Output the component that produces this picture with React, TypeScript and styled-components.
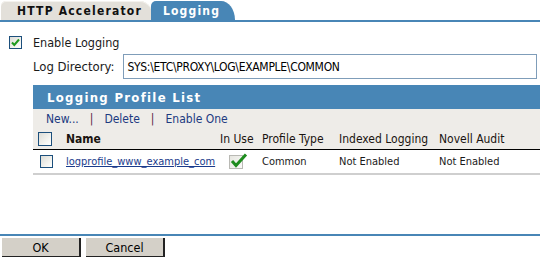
import React from "react";
import styled, { createGlobalStyle } from "styled-components";

const BLUE = "#4886b6";

const GlobalStyle = createGlobalStyle`
  html, body {
    margin: 0;
    padding: 0;
    background: #ffffff;
  }
  body {
    font-family: "DejaVu Sans Condensed", "DejaVu Sans", sans-serif;
    font-size: 12px;
    color: #1a1a1a;
  }
`;

const Page = styled.div`
  width: 540px;
  height: 258px;
  display: flex;
  flex-direction: column;
  overflow: hidden;
`;

const TabStrip = styled.div`
  display: flex;
  align-items: flex-end;
  height: 20px;
  padding-left: 1px;
  border-bottom: 2px solid ${BLUE};
`;

const Tab = styled.div<{ $active?: boolean }>`
  height: 19px;
  display: flex;
  align-items: center;
  padding: 0 ${(p) => (p.$active ? "15px 0 12px" : "12px 0 16px")};
  margin-left: ${(p) => (p.$active ? "-3px" : "0")};
  border-radius: 5px 14px 0 0 / 5px 19px 0 0;
  background: ${(p) => (p.$active ? BLUE : "#e3e0da")};
  color: ${(p) => (p.$active ? "#ffffff" : "#111111")};
  font-family: "DejaVu Sans Condensed", "DejaVu Sans", sans-serif;
  font-weight: bold;
  font-size: 12px;
  letter-spacing: 1.2px;
  position: relative;
  z-index: ${(p) => (p.$active ? 1 : 0)};
  box-shadow: ${(p) => (p.$active ? "none" : "inset 0 1px 0 #f4f2ee")};
`;

const Body = styled.div`
  flex: 1;
  display: flex;
  flex-direction: column;
  padding-top: 14px;
`;

const EnableRow = styled.label`
  display: flex;
  align-items: center;
  gap: 11px;
  margin-left: 9px;
  height: 13px;
  font-size: 12.5px;
`;

const Box = styled.span<{ $size?: number }>`
  display: inline-flex;
  align-items: center;
  justify-content: center;
  box-sizing: border-box;
  width: ${(p) => p.$size ?? 13}px;
  height: ${(p) => p.$size ?? 13}px;
  border: 1px solid #1c4f7c;
  background: linear-gradient(135deg, #dcdcd6 0%, #f6f6f2 70%, #ffffff 100%);
  flex: none;
`;

const DirRow = styled.div`
  display: flex;
  align-items: center;
  margin: 5px 0 0 33px;
  gap: 9px;
`;

const DirLabel = styled.span`
  font-size: 13px;
`;

const DirInput = styled.input`
  box-sizing: border-box;
  width: 414px;
  height: 25px;
  border: 1px solid #7f9db9;
  padding: 0 3px;
  font-family: "DejaVu Sans Condensed", "DejaVu Sans", sans-serif;
  font-size: 12px;
  color: #000;
  letter-spacing: -0.3px;
  outline: none;
`;

const Panel = styled.div`
  margin: 6px 0 0 33px;
`;

const PanelTitle = styled.div`
  height: 24px;
  display: flex;
  align-items: center;
  padding-left: 14px;
  background: ${BLUE};
  color: #ffffff;
  font-family: "DejaVu Sans Condensed", "DejaVu Sans", sans-serif;
  font-weight: bold;
  font-size: 13px;
  letter-spacing: 1.3px;
`;

const Toolbar = styled.div`
  height: 20px;
  display: flex;
  align-items: center;
  padding-left: 13px;
  background: #eeece8;
  font-size: 12px;
`;

const ToolLink = styled.a`
  color: #1c3a80;
  text-decoration: none;
`;

const Sep = styled.span`
  color: #5a1f46;
  margin: 0 11px 0 11px;
`;

const Grid = styled.table`
  width: 100%;
  border-collapse: collapse;
  table-layout: fixed;
  font-size: 12px;
`;

const HeadCell = styled.th<{ $bold?: boolean; $w?: number }>`
  width: ${(p) => (p.$w ? `${p.$w - 4}px` : "auto")};
  height: 20px;
  padding: 0 0 0 4px;
  text-align: left;
  background: #eeece8;
  font-weight: ${(p) => (p.$bold ? "bold" : "normal")};
  color: #1a1410;
  border-bottom: 1px solid #000000;
  white-space: nowrap;
  vertical-align: middle;
`;

const Cell = styled.td<{ $pl?: number }>`
  height: 23px;
  padding: 0 0 0 ${(p) => p.$pl ?? 4}px;
  border-bottom: 2px solid #cfcfcf;
  white-space: nowrap;
  vertical-align: middle;
  font-size: 11px;
`;

const RowLink = styled.a`
  color: #1a3b8c;
  text-decoration: underline;
  font-size: 11px;
`;

const InUse = styled.span`
  position: relative;
  display: inline-block;
  width: 14px;
  height: 14px;
  box-sizing: border-box;
  border: 1px solid #b9b9b4;
  background: linear-gradient(135deg, #e6e6e0 0%, #fafaf8 100%);
  margin-left: 13px;
  vertical-align: middle;
`;

const InUseMark = styled.svg`
  position: absolute;
  left: 0;
  top: -3px;
`;

const Spacer = styled.div`
  flex: 1;
`;

const Footer = styled.div`
  display: flex;
  gap: 5px;
  padding: 2px 0 0 2px;
  height: 20px;
  border-top: 2px solid ${BLUE};
`;

const Button = styled.button`
  box-sizing: border-box;
  width: 79px;
  height: 19px;
  padding: 0;
  background: #d4d0c8;
  border: none;
  border-right: 2px solid #222;
  border-bottom: 1px solid #222;
  font-family: "DejaVu Sans Condensed", "DejaVu Sans", sans-serif;
  font-size: 12.5px;
  color: #000;
`;

function Check({ size = 11 }: { size?: number }) {
  return (
    <svg width={size} height={size} viewBox="0 0 11 11">
      <path d="M2 5.5 L4.3 8 L9 2.5" fill="none" stroke="#1f9a1f" strokeWidth="2" />
    </svg>
  );
}

export default function App() {
  return (
    <>
      <GlobalStyle />
      <Page>
        <TabStrip>
          <Tab>HTTP Accelerator</Tab>
          <Tab $active>Logging</Tab>
        </TabStrip>
        <Body>
          <EnableRow>
            <Box>
              <Check />
            </Box>
            Enable Logging
          </EnableRow>
          <DirRow>
            <DirLabel>Log Directory:</DirLabel>
            <DirInput defaultValue="SYS:\ETC\PROXY\LOG\EXAMPLE\COMMON" />
          </DirRow>
          <Panel>
            <PanelTitle>Logging Profile List</PanelTitle>
            <Toolbar>
              <ToolLink href="#">New...</ToolLink>
              <Sep>|</Sep>
              <ToolLink href="#">Delete</ToolLink>
              <Sep>|</Sep>
              <ToolLink href="#">Enable One</ToolLink>
            </Toolbar>
            <Grid>
              <thead>
                <tr>
                  <HeadCell $w={29}>
                    <Box $size={14} style={{ verticalAlign: "middle", marginLeft: 1 }} />
                  </HeadCell>
                  <HeadCell $w={154} $bold>Name</HeadCell>
                  <HeadCell $w={42}>In Use</HeadCell>
                  <HeadCell $w={77}>Profile Type</HeadCell>
                  <HeadCell $w={100}>Indexed Logging</HeadCell>
                  <HeadCell>Novell Audit</HeadCell>
                </tr>
              </thead>
              <tbody>
                <tr>
                  <Cell $pl={7}>
                    <Box $size={13} style={{ verticalAlign: "middle" }} />
                  </Cell>
                  <Cell>
                    <RowLink href="#">logprofile_www_example_com</RowLink>
                  </Cell>
                  <Cell $pl={0}>
                    <InUse>
                      <InUseMark width="18" height="15" viewBox="0 0 18 15">
                        <path d="M2 8 L6 12.5 L16 1.5" fill="none" stroke="#1e8c1e" strokeWidth="3" />
                      </InUseMark>
                    </InUse>
                  </Cell>
                  <Cell>Common</Cell>
                  <Cell>Not Enabled</Cell>
                  <Cell>Not Enabled</Cell>
                </tr>
              </tbody>
            </Grid>
          </Panel>
          <Spacer />
        </Body>
        <Footer>
          <Button>OK</Button>
          <Button>Cancel</Button>
        </Footer>
      </Page>
    </>
  );
}
